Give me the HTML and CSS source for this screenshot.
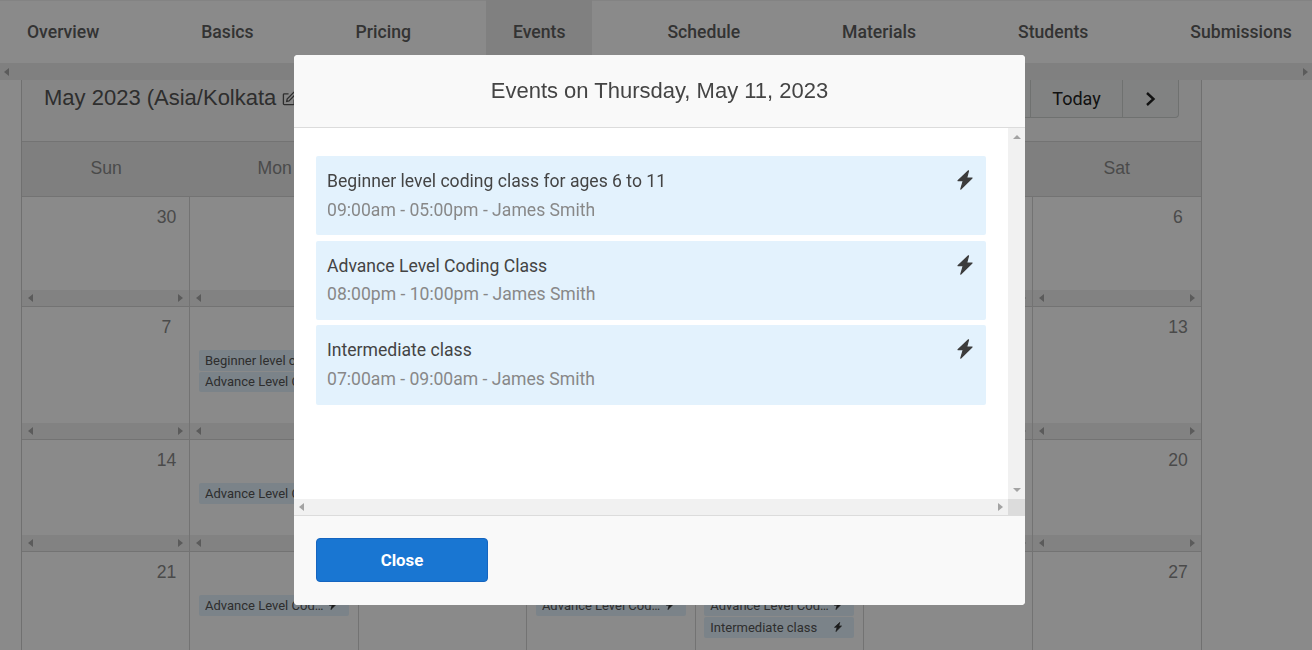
FILE: index.html
```html
<!DOCTYPE html>
<html lang="en">
<head>
<meta charset="utf-8">
<title>Events</title>
<link rel="stylesheet" href="styles.css">
</head>
<body>
<nav class="tabs">
  <a class="tab">Overview</a><a class="tab">Basics</a><a class="tab">Pricing</a><a class="tab active">Events</a><a class="tab">Schedule</a><a class="tab">Materials</a><a class="tab">Students</a><a class="tab">Submissions</a>
</nav>
<div class="hbar page-bar"><i class="arr left"></i><i class="arr right"></i></div>
<main class="calendar">
  <header class="toolbar">
    <h2 class="month">May 2023 (Asia/Kolkata <svg class="edit" viewBox="0 0 16 16" width="15" height="15"><path d="M13 9v4.500a1 1 0 0 1-1 1H2.500a1 1 0 0 1-1-1V4a1 1 0 0 1 1-1H7" fill="none" stroke="currentColor" stroke-width="1.400"/><path d="M5.500 8.500 12.500 1.500l2 2-7 7-2.500.5z" fill="none" stroke="currentColor" stroke-width="1.400"/></svg></h2>
    <div class="btns"><button class="btn prev">&lsaquo;</button><button class="btn today">Today</button><button class="btn next"><svg viewBox="0 0 12 16" width="12" height="16"><path d="M2 2 8.500 8 2 14" fill="none" stroke="currentColor" stroke-width="2.400"/></svg></button></div>
  </header>
  <div class="grid head">
    <div class="dow">Sun</div><div class="dow">Mon</div><div class="dow">Tue</div><div class="dow">Wed</div><div class="dow">Thu</div><div class="dow">Fri</div><div class="dow">Sat</div>
  </div>
  <div class="grid r1">
    <div class="cell"><span class="num">30</span><div class="hbar"><i class="arr left"></i><i class="arr right"></i></div></div>
    <div class="cell"><span class="num">1</span><div class="hbar"><i class="arr left"></i><i class="arr right"></i></div></div>
    <div class="cell"><span class="num">2</span><div class="hbar"><i class="arr left"></i><i class="arr right"></i></div></div>
    <div class="cell"><span class="num">3</span><div class="hbar"><i class="arr left"></i><i class="arr right"></i></div></div>
    <div class="cell"><span class="num">4</span><div class="hbar"><i class="arr left"></i><i class="arr right"></i></div></div>
    <div class="cell"><span class="num">5</span><div class="hbar"><i class="arr left"></i><i class="arr right"></i></div></div>
    <div class="cell"><span class="num">6</span><div class="hbar"><i class="arr left"></i><i class="arr right"></i></div></div>
  </div>
  <div class="grid r2">
    <div class="cell"><span class="num">7</span><div class="hbar"><i class="arr left"></i><i class="arr right"></i></div></div>
    <div class="cell"><span class="num">8</span><div class="pills"><div class="pill"><span class="pt">Beginner level coding class for ages 6 to 11</span><svg class="bolt" viewBox="0 0 16 20"><path d="M11.500.8 1 10.600H6.300L3.800 19.200 15 8H9.600z"/></svg></div><div class="pill"><span class="pt">Advance Level Coding Class</span><svg class="bolt" viewBox="0 0 16 20"><path d="M11.500.8 1 10.600H6.300L3.800 19.200 15 8H9.600z"/></svg></div></div><div class="hbar"><i class="arr left"></i><i class="arr right"></i></div></div>
    <div class="cell"><span class="num">9</span><div class="hbar"><i class="arr left"></i><i class="arr right"></i></div></div>
    <div class="cell"><span class="num">10</span><div class="hbar"><i class="arr left"></i><i class="arr right"></i></div></div>
    <div class="cell"><span class="num">11</span><div class="hbar"><i class="arr left"></i><i class="arr right"></i></div></div>
    <div class="cell"><span class="num">12</span><div class="hbar"><i class="arr left"></i><i class="arr right"></i></div></div>
    <div class="cell"><span class="num">13</span><div class="hbar"><i class="arr left"></i><i class="arr right"></i></div></div>
  </div>
  <div class="grid r3">
    <div class="cell"><span class="num">14</span><div class="hbar"><i class="arr left"></i><i class="arr right"></i></div></div>
    <div class="cell"><span class="num">15</span><div class="pills"><div class="pill"><span class="pt">Advance Level Coding Class</span><svg class="bolt" viewBox="0 0 16 20"><path d="M11.500.8 1 10.600H6.300L3.800 19.200 15 8H9.600z"/></svg></div></div><div class="hbar"><i class="arr left"></i><i class="arr right"></i></div></div>
    <div class="cell"><span class="num">16</span><div class="hbar"><i class="arr left"></i><i class="arr right"></i></div></div>
    <div class="cell"><span class="num">17</span><div class="hbar"><i class="arr left"></i><i class="arr right"></i></div></div>
    <div class="cell"><span class="num">18</span><div class="hbar"><i class="arr left"></i><i class="arr right"></i></div></div>
    <div class="cell"><span class="num">19</span><div class="hbar"><i class="arr left"></i><i class="arr right"></i></div></div>
    <div class="cell"><span class="num">20</span><div class="hbar"><i class="arr left"></i><i class="arr right"></i></div></div>
  </div>
  <div class="grid r4">
    <div class="cell"><span class="num">21</span></div>
    <div class="cell"><span class="num">22</span><div class="pills"><div class="pill"><span class="pt">Advance Level Coding Class</span><svg class="bolt" viewBox="0 0 16 20"><path d="M11.500.8 1 10.600H6.300L3.800 19.200 15 8H9.600z"/></svg></div></div></div>
    <div class="cell"><span class="num">23</span></div>
    <div class="cell"><span class="num">24</span><div class="pills"><div class="pill"><span class="pt">Advance Level Coding Class</span><svg class="bolt" viewBox="0 0 16 20"><path d="M11.500.8 1 10.600H6.300L3.800 19.200 15 8H9.600z"/></svg></div></div></div>
    <div class="cell"><span class="num">25</span><div class="pills"><div class="pill"><span class="pt">Advance Level Coding Class</span><svg class="bolt" viewBox="0 0 16 20"><path d="M11.500.8 1 10.600H6.300L3.800 19.200 15 8H9.600z"/></svg></div><div class="pill"><span class="pt">Intermediate class</span><svg class="bolt" viewBox="0 0 16 20"><path d="M11.500.8 1 10.600H6.300L3.800 19.200 15 8H9.600z"/></svg></div></div></div>
    <div class="cell"><span class="num">26</span></div>
    <div class="cell"><span class="num">27</span></div>
  </div>
</main>
<div class="backdrop"></div>
<section class="modal">
  <header class="modal-head"><h3 class="modal-title">Events on Thursday, May 11, 2023</h3></header>
  <div class="modal-scroll">
    <div class="modal-view">
      <div class="modal-body">
        <article class="event ev1"><div class="ev-text"><div class="ev-title">Beginner level coding class for ages 6 to 11</div><div class="ev-time">09:00am - 05:00pm - James Smith</div></div><svg class="ev-bolt" viewBox="0 0 16 20"><path d="M11.500.8 1 10.600H6.300L3.800 19.200 15 8H9.600z"/></svg></article>
        <article class="event ev2"><div class="ev-text"><div class="ev-title">Advance Level Coding Class</div><div class="ev-time">08:00pm - 10:00pm - James Smith</div></div><svg class="ev-bolt" viewBox="0 0 16 20"><path d="M11.500.8 1 10.600H6.300L3.800 19.200 15 8H9.600z"/></svg></article>
        <article class="event ev3"><div class="ev-text"><div class="ev-title">Intermediate class</div><div class="ev-time">07:00am - 09:00am - James Smith</div></div><svg class="ev-bolt" viewBox="0 0 16 20"><path d="M11.500.8 1 10.600H6.300L3.800 19.200 15 8H9.600z"/></svg></article>
      </div>
      <div class="vbar"><i class="arr up"></i><i class="arr down"></i></div>
    </div>
    <div class="modal-hrow"><div class="hbar light"><i class="arr left"></i><i class="arr right"></i></div><div class="corner"></div></div>
  </div>
  <footer class="modal-foot"><button class="close">Close</button></footer>
</section>
</body>
</html>
```
FILE: styles.css
```css
* { box-sizing: border-box; }
html, body { margin: 0; height: 650px; overflow: hidden; background: #fff; }
body { font-family: Roboto, "Liberation Sans", sans-serif; color: #333; }

.tabs { display: flex; gap: 48px; height: 63px; background: #fff; box-shadow: inset 0 1px 0 #f2f2f2; white-space: nowrap; overflow: hidden; }
.tab { display: flex; align-items: center; padding: 0 27px; font-size: 17.600px; font-weight: 500; color: #5e5e5e; flex: none; }
.tab.active { background: #ececec; }

.hbar { display: flex; justify-content: space-between; align-items: center; height: 17px; background: #f1f1f1; padding: 0 6px; }
.page-bar { background: #ececec; padding: 0 4px; }
.arr { display: block; width: 0; height: 0; border: 4px solid transparent; }
.arr.left { border-left: 0; border-right: 5px solid #a8a8a8; }
.arr.right { border-right: 0; border-left: 5px solid #a8a8a8; }
.arr.up { border-top: 0; border-bottom: 4px solid #a3a3a3; }
.arr.down { border-bottom: 0; border-top: 4px solid #a3a3a3; }

.calendar { width: 1181px; margin-left: 21px; background: #fff; border: solid #cfcfcf; border-width: 0 1px; }
.toolbar { display: flex; justify-content: space-between; height: 62px; padding-right: 22px; background: #f8f8f8; border-bottom: 1px solid #d4d4d4; }
.month { margin: 4px 0 0 22px; font: 400 22px/28px "Liberation Sans", sans-serif; color: #555; }
.edit { vertical-align: -1px; }
.btns { display: flex; height: 38px; border: 1px solid #cdd1d0; border-top: 0; border-radius: 0 0 4px 4px; background: #eef1f0; }
.btn { border: 0; background: none; font: 400 18px Roboto, sans-serif; color: #222; padding: 0; display: flex; align-items: center; justify-content: center; border-left: 1px solid #cdd1d0; }
.btn.prev { width: 92px; border-left: 0; }
.btn.today { width: 92px; }
.btn.next { width: 56px; }

.grid { display: grid; grid-template-columns: repeat(7, 1fr); }
.head { height: 55px; background: #ebebeb; border-bottom: 1px solid #d4d4d4; }
.dow { display: flex; align-items: center; justify-content: center; padding-bottom: 2px; font: 400 17.600px "Liberation Sans", sans-serif; color: #8a8a8a; }
.r1 { height: 110px; }
.r2 { height: 133px; }
.r3 { height: 112px; }
.r4 { height: 110px; }
.cell { position: relative; display: flex; flex-direction: column; border-right: 1px solid #d4d4d4; border-bottom: 1px solid #d4d4d4; min-width: 0; }
.cell:last-child { border-right: 0; }
.num { align-self: flex-end; width: 20px; height: 32px; margin-right: 13px; padding-top: 9px; text-align: center; white-space: nowrap; font: 400 17.600px/22px "Liberation Sans", sans-serif; color: #8a8a8a; }
.cell .hbar { margin-top: auto; height: 16px; }
.pills { display: flex; flex-direction: column; gap: 1px; margin: 11px 9px 0 8.600px; }
.r4 .pills { gap: 1.500px; }
.pill { display: flex; align-items: center; gap: 4px; height: 20.500px; padding: 0 12px 0 6px; background: #e3f2fd; border-radius: 2px; font-size: 13px; color: #555; }
.pt { flex: 1; min-width: 0; white-space: nowrap; overflow: hidden; text-overflow: ellipsis; }
.bolt { width: 8px; height: 10px; fill: #333; stroke: #333; stroke-width: 1.500; stroke-linejoin: round; flex: none; }

.backdrop { position: fixed; inset: 0; background: rgba(0, 0, 0, .46); }
.modal { position: fixed; left: 294px; top: 55px; width: 731px; height: 550px; display: flex; flex-direction: column; background: #fff; border-radius: 4px; overflow: hidden; }
.modal-head { height: 73px; background: #f9f9f9; border-bottom: 1px solid #dcdcdc; display: flex; align-items: center; justify-content: center; }
.modal-title { margin: 0; font: 400 22px "Liberation Sans", sans-serif; color: #444; }
.modal-scroll { flex: 1; display: flex; flex-direction: column; min-height: 0; }
.modal-view { flex: 1; display: flex; min-height: 0; }
.modal-body { flex: 1; padding: 28px 22px 0; display: flex; flex-direction: column; }
.vbar { width: 17px; background: #f1f1f1; display: flex; flex-direction: column; justify-content: space-between; align-items: center; padding: 7px 0; }
.modal-hrow { display: flex; height: 16px; }
.hbar.light { flex: 1; height: 16px; background: #f1f1f1; padding: 0 5px; }
.hbar.light .arr.left { border-right-color: #a3a3a3; }
.hbar.light .arr.right { border-left-color: #a3a3a3; }
.corner { width: 17px; background: #dcdcdc; }
.event { display: flex; justify-content: space-between; background: #e3f2fd; border-radius: 2px; padding: 0 13px 0 11px; height: 79px; }
.ev2 { margin-top: 6px; }
.ev3 { margin-top: 5px; height: 80px; }
.ev-text { padding-top: 13px; }
.ev-title { font-size: 17.600px; line-height: 24px; color: #444; }
.ev-time { margin-top: 5px; font-size: 17.600px; line-height: 24px; color: #888; }
.ev2 .ev-time { margin-top: 4px; }
.ev-bolt { width: 16px; height: 20px; fill: #3c3c3c; stroke: #3c3c3c; stroke-width: 1.200; stroke-linejoin: round; margin-top: 14px; }
.modal-foot { height: 90px; background: #f9f9f9; border-top: 1px solid #dcdcdc; padding: 22px; }
.close { width: 172px; height: 44px; background: #1976d2; color: #fff; border: 1px solid #1565c0; border-radius: 4px; font: 700 16.800px Roboto, sans-serif; }
```
